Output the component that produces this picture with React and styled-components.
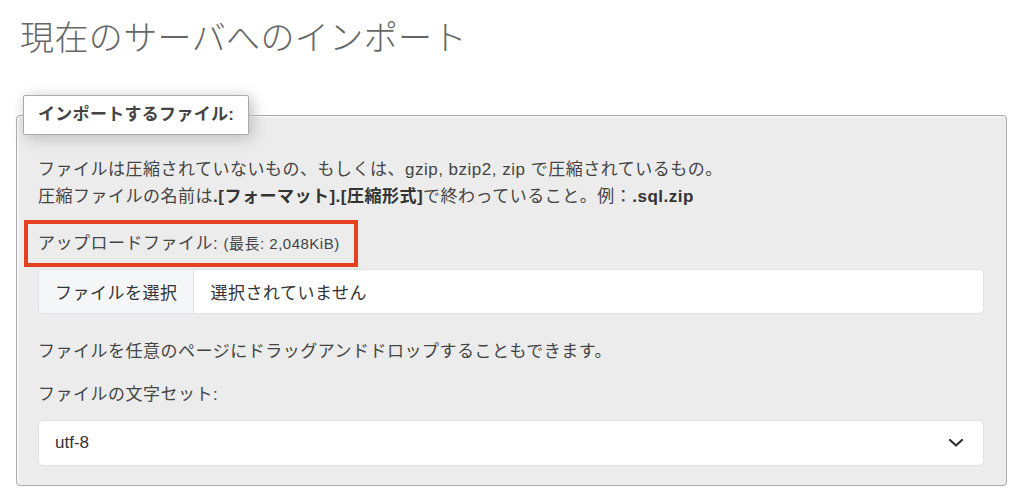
import React from "react";
import styled, { createGlobalStyle } from "styled-components";

const GlobalStyle = createGlobalStyle`
  body {
    margin: 0;
    background: #fff;
    font-family: "Liberation Sans", "Noto Sans CJK JP", sans-serif;
    color: #444;
  }
`

const Page = styled.div`
  padding: 0 17px 18px 16px;
`

const Title = styled.h2`
  margin: 0;
  padding: 17px 0 0 4px;
  font-size: 34px;
  line-height: 42px;
  font-weight: 300;
  letter-spacing: 0.4px;
  color: #666;
`

const Fieldset = styled.fieldset`
  margin: 36px 0 0 0;
  padding: 0 22px 19px 21px;
  border: 1px solid #aaa;
  border-radius: 4px;
  background: #ececec;
  box-shadow: 1px 1px 2px #fff inset;
  min-width: 0;
`

const Legend = styled.legend`
  margin-left: -15px;
  padding: 7px 14px;
  border: 1px solid #aaa;
  border-radius: 2px;
  background: #fff;
  box-shadow: 3px 3px 15px #bbb;
  font-size: 17px;
  line-height: 24px;
  font-weight: bold;
  letter-spacing: 0.3px;
  color: #444;
`

const Text = styled.p`
  margin: ${(p) => p.$top || 0}px 0 0 0;
  font-size: 17px;
  line-height: 27px;
  letter-spacing: 0.5px;
  color: #444;
`

const Strong = styled.b`
  font-weight: bold;
  color: #333;
`

const Small = styled.span`
  font-size: 15px;
`

const Marked = styled.label`
  display: inline-block;
  margin: 10px 0 0 -14px;
  padding: 8px 14px 8px 10px;
  border: 4px solid #e5401f;
  font-size: 17px;
  line-height: 23px;
  letter-spacing: 0.5px;
  color: #444;
`

const FileBox = styled.div`
  display: flex;
  margin-top: 2px;
  height: 43px;
  border: 1px solid #dfe1e5;
  border-radius: 5px;
  background: #fff;
  overflow: hidden;
  font-size: 17px;
  letter-spacing: 0.5px;
`

const FileButton = styled.span`
  display: flex;
  align-items: center;
  padding: 0 15px 0 16px;
  background: #f5f6f8;
  border-right: 1px solid #dfe1e5;
  color: #333;
`

const FileName = styled.span`
  display: flex;
  align-items: center;
  padding-left: 17px;
  color: #333;
`

const Select = styled.div`
  display: flex;
  align-items: center;
  justify-content: space-between;
  margin-top: 12px;
  height: 44px;
  padding: 0 20px 0 16px;
  border: 1px solid #dfe1e5;
  border-radius: 5px;
  background: #fff;
  font-size: 17px;
  color: #333;
`

const Chevron = () => (
  <svg width="14" height="8" viewBox="0 0 14 8">
    <path d="M1 1l6 5.5L13 1" fill="none" stroke="#333" strokeWidth="2.2" strokeLinecap="round" strokeLinejoin="round" />
  </svg>
)

const App = () => {
  return (
    <Page>
      <GlobalStyle />
      <Title>現在のサーバへのインポート</Title>
      <Fieldset>
        <Legend>インポートするファイル:</Legend>
        <Text $top={21}>ファイルは圧縮されていないもの、もしくは、gzip, bzip2, zip で圧縮されているもの。</Text>
        <Text>
          圧縮ファイルの名前は<Strong>.[フォーマット].[圧縮形式]</Strong>で終わっていること。例：<Strong>.sql.zip</Strong>
        </Text>
        <Marked>
          アップロードファイル: <Small>(最長: 2,048KiB)</Small>
        </Marked>
        <FileBox>
          <FileButton>ファイルを選択</FileButton>
          <FileName>選択されていません</FileName>
        </FileBox>
        <Text $top={24}>ファイルを任意のページにドラッグアンドドロップすることもできます。</Text>
        <Text $top={16}>ファイルの文字セット:</Text>
        <Select>
          <span>utf-8</span>
          <Chevron />
        </Select>
      </Fieldset>
    </Page>
  )
}

export default App;
